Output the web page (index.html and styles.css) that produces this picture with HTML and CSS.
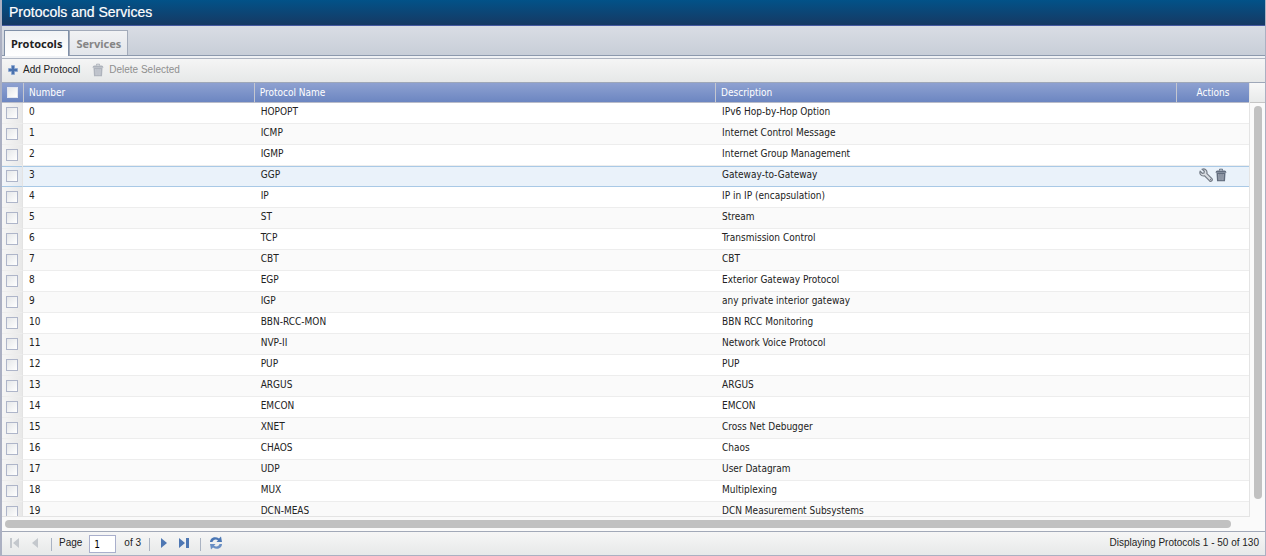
FILE: index.html
```html
<!DOCTYPE html>
<html lang="en">
<head>
<meta charset="utf-8">
<title>Protocols and Services</title>
<link rel="stylesheet" href="styles.css">
</head>
<body>
<svg class="defs" aria-hidden="true">
  <symbol id="trash" viewBox="0 0 12 14">
    <path d="M4.500 2.500V1.200h3v1.300" fill="none" stroke="currentColor"/>
    <path d="M.5 4.700Q.8 2.400 2.500 2.400h7q1.700 0 2 2.300z" fill="currentColor"/>
    <path d="M1.500 5h9l-.5 8.300H2z" fill="currentColor"/>
    <path d="M3.900 6l.2 6.200M6 6v6.200M8.100 6l-.2 6.200" stroke="#dfe3ea" stroke-width=".7"/>
  </symbol>
</svg>
<main class="app">
  <h1 class="title">Protocols and Services</h1>
  <nav class="tabs">
    <button class="tab tab-active" type="button">Protocols</button>
    <button class="tab" type="button">Services</button>
  </nav>
  <div class="toolbar">
    <button class="tool" type="button"><svg class="ico-add" viewBox="0 0 10 10"><path d="M3.5.5h3v3h3v3h-3v3h-3v-3h-3v-3h3z" fill="#4a72ae" stroke="#8aa6d0" stroke-width=".8"/></svg>Add Protocol</button>
    <button class="tool" type="button" disabled><svg class="ico-trash"><use href="#trash"/></svg>Delete Selected</button>
  </div>
  <section class="grid">
    <div class="viewport">
      <table class="table">
        <colgroup><col class="c-check"><col class="c-number"><col class="c-name"><col><col class="c-actions"></colgroup>
        <thead><tr><th><input type="checkbox" aria-label="Select all"></th><th>Number</th><th>Protocol Name</th><th>Description</th><th class="center">Actions</th></tr></thead>
        <tbody>
          <tr><td><input type="checkbox" aria-label="Select 0"></td><td>0</td><td>HOPOPT</td><td>IPv6 Hop-by-Hop Option</td><td></td></tr>
          <tr><td><input type="checkbox" aria-label="Select 1"></td><td>1</td><td>ICMP</td><td>Internet Control Message</td><td></td></tr>
          <tr><td><input type="checkbox" aria-label="Select 2"></td><td>2</td><td>IGMP</td><td>Internet Group Management</td><td></td></tr>
          <tr class="over"><td><input type="checkbox" aria-label="Select 3"></td><td>3</td><td>GGP</td><td>Gateway-to-Gateway</td><td><div class="actions"><button type="button" aria-label="Edit"><svg class="ico-wrench" viewBox="0 0 14 14"><path d="M3.200 1.200 5.300 3.200 5 5 3.300 5.300 1.200 3.300C.2 5.500 1.800 8 4.300 8l1.300-.1 5 5c1.600 1.200 3.500-.8 2.300-2.300l-5-5L8 4.300C8 1.800 5.500.2 3.200 1.200z" fill="#d9dde2" stroke="#737b86" stroke-width="1.200"/><circle cx="11.500" cy="11.500" r=".7" fill="#737b86"/></svg></button><button type="button" aria-label="Delete"><svg class="ico-trash"><use href="#trash"/></svg></button></div></td></tr>
          <tr><td><input type="checkbox" aria-label="Select 4"></td><td>4</td><td>IP</td><td>IP in IP (encapsulation)</td><td></td></tr>
          <tr><td><input type="checkbox" aria-label="Select 5"></td><td>5</td><td>ST</td><td>Stream</td><td></td></tr>
          <tr><td><input type="checkbox" aria-label="Select 6"></td><td>6</td><td>TCP</td><td>Transmission Control</td><td></td></tr>
          <tr><td><input type="checkbox" aria-label="Select 7"></td><td>7</td><td>CBT</td><td>CBT</td><td></td></tr>
          <tr><td><input type="checkbox" aria-label="Select 8"></td><td>8</td><td>EGP</td><td>Exterior Gateway Protocol</td><td></td></tr>
          <tr><td><input type="checkbox" aria-label="Select 9"></td><td>9</td><td>IGP</td><td>any private interior gateway</td><td></td></tr>
          <tr><td><input type="checkbox" aria-label="Select 10"></td><td>10</td><td>BBN-RCC-MON</td><td>BBN RCC Monitoring</td><td></td></tr>
          <tr><td><input type="checkbox" aria-label="Select 11"></td><td>11</td><td>NVP-II</td><td>Network Voice Protocol</td><td></td></tr>
          <tr><td><input type="checkbox" aria-label="Select 12"></td><td>12</td><td>PUP</td><td>PUP</td><td></td></tr>
          <tr><td><input type="checkbox" aria-label="Select 13"></td><td>13</td><td>ARGUS</td><td>ARGUS</td><td></td></tr>
          <tr><td><input type="checkbox" aria-label="Select 14"></td><td>14</td><td>EMCON</td><td>EMCON</td><td></td></tr>
          <tr><td><input type="checkbox" aria-label="Select 15"></td><td>15</td><td>XNET</td><td>Cross Net Debugger</td><td></td></tr>
          <tr><td><input type="checkbox" aria-label="Select 16"></td><td>16</td><td>CHAOS</td><td>Chaos</td><td></td></tr>
          <tr><td><input type="checkbox" aria-label="Select 17"></td><td>17</td><td>UDP</td><td>User Datagram</td><td></td></tr>
          <tr><td><input type="checkbox" aria-label="Select 18"></td><td>18</td><td>MUX</td><td>Multiplexing</td><td></td></tr>
          <tr><td><input type="checkbox" aria-label="Select 19"></td><td>19</td><td>DCN-MEAS</td><td>DCN Measurement Subsystems</td><td></td></tr>
        </tbody>
      </table>
    </div>
    <div class="vscroll"><div class="vhead"></div><div class="vtrack"><div class="vthumb"></div></div></div>
  </section>
  <div class="hscroll"><div class="hthumb"></div></div>
  <footer class="pager">
    <button class="page-btn" type="button" disabled aria-label="First page"><svg viewBox="0 0 12 12"><path d="M1 1h2v10H1zM10 1v10L4 6z" fill="currentColor"/></svg></button>
    <button class="page-btn" type="button" disabled aria-label="Previous page"><svg viewBox="0 0 12 12"><path d="M9 1v10L3 6z" fill="currentColor"/></svg></button>
    <span class="sep"></span>
    <label class="page-label" for="page">Page</label>
    <input class="page-input" id="page" type="text" value="1">
    <span class="of">of 3</span>
    <span class="sep"></span>
    <button class="page-btn" type="button" aria-label="Next page"><svg viewBox="0 0 12 12"><path d="M3 1v10l6-5z" fill="currentColor"/></svg></button>
    <button class="page-btn" type="button" aria-label="Last page"><svg viewBox="0 0 12 12"><path d="M8 1h3v10H8zM1 1v10l6-5z" fill="currentColor"/></svg></button>
    <span class="sep"></span>
    <button class="page-btn refresh" type="button" aria-label="Refresh"><svg viewBox="0 0 14 14"><path d="M1 6C1 2 6-.5 10 2.500L12 .5 13 6H7.500L9 4.300C6.500 2.700 4 4 3.500 6z" fill="#4a76b4"/><path d="M13 8c0 4-5 6.500-9 3.500L2 13.500 1 8h5.500L5 9.700C7.500 11.300 10 10 10.500 8z" fill="#6a8fc4"/></svg></button>
    <span class="status">Displaying Protocols 1 - 50 of 130</span>
  </footer>
</main>
</body>
</html>
```
FILE: styles.css
```css
* { box-sizing: border-box; }
body { margin: 0; font: 10px/14px "Liberation Sans", Arial, sans-serif; color: #222; }
button { margin: 0; padding: 0; border: 0; background: none; font: inherit; color: inherit; }
svg { display: block; }
.defs { position: absolute; width: 0; height: 0; }
.app { display: flex; flex-direction: column; height: 100vh; overflow: hidden; border: solid #abb0c2; border-width: 0 1px 1px 2px; }
.title { flex: none; margin: 0 -1px 0 -2px; height: 26px; padding: 0 9px; border-bottom: 1px solid #4559a0; background: linear-gradient(#025288, #163963); color: #fff; font-size: 14px; font-weight: 400; line-height: 24px; -webkit-text-stroke: 0.2px #fff; }
.tabs { flex: none; display: flex; align-items: flex-end; height: 30px; padding: 0 2px; border-bottom: 1px solid #8c99ad; background: linear-gradient(#d9dde4, #c8ced8); }
.tab { height: 25px; padding: 0 6px; border: 1px solid #a3abba; border-bottom: 0; background: linear-gradient(#f1f2f4, #e2e5ea); color: #858585; font: bold 11px/23px "Noto Sans", Tahoma, sans-serif; }
.tab-active { height: 26px; margin-bottom: -1px; border-color: #8090a8; background: linear-gradient(#f1f3f5, #fff); color: #222; }
.toolbar { flex: none; display: flex; align-items: center; gap: 12px; height: 27px; padding: 2px 6px 0; border-bottom: 1px solid #9ea7b8; background: linear-gradient(#f0f2f5 2px, #adb4c1 2px, #adb4c1 3px, #f5f5f5 3px, #e6e8e8); }
.tool { display: flex; align-items: center; gap: 5px; }
.tool:disabled { color: #8f8f8f; }
.ico-add { width: 10px; height: 10px; }
.ico-trash { width: 12px; height: 14px; color: #626d7e; }
.tool .ico-trash { color: #aeb3bc; }
.grid { flex: 1; min-height: 0; display: flex; background: #fafafa; }
.viewport { flex: 1; min-width: 0; overflow: hidden; border-bottom: 1px solid #e4e4e4; }
.table { width: 100%; table-layout: fixed; border-spacing: 0; border-right: 1px solid #e4e4e4; font: 10px/14px "DejaVu Sans Condensed", Tahoma, sans-serif; }
.c-check { width: 21px; }
.c-number { width: 18.5%; }
.c-name { width: 37%; }
.c-actions { width: 73px; }
th { height: 20px; padding: 0 5px; border-left: 1px solid #c5c7d0; border-bottom: 1px solid #b9bcc9; background: linear-gradient(#8ea1d1, #6c86c1); color: #fff; font-weight: 400; text-align: left; }
th.center { text-align: center; }
td { height: 21px; padding: 0 6px 3px; border-bottom: 1px solid #ededed; background: #fff; }
td:nth-child(3), td:nth-child(4) { padding-left: 7px; }
tr:nth-child(even) td { background: #fafafa; }
th:first-child { padding: 0 0 0 5px; border-left: 0; }
tbody td:first-child { padding: 0 0 0 4px; border-right: 1px solid #e3e3e3; background: linear-gradient(90deg, #f6f6f6, #e8e8e8); }
tbody .over td { border-bottom-color: #a9c9e6; background: #eaf2fa; box-shadow: inset 0 1px #a9c9e6; }
tbody .over td:first-child { background: linear-gradient(90deg, #f3f6fa, #e4e9ef); }
input[type=checkbox] { display: block; appearance: none; width: 12px; height: 12px; margin: 0; border: 1px solid #aeb5c9; background: linear-gradient(135deg, #e5e7e9, #fff); }
th input[type=checkbox] { width: 11px; height: 11px; border-color: #e2e6f0; }
.actions { display: flex; justify-content: center; gap: 2px; }
.ico-wrench { width: 14px; height: 14px; }
.vscroll { flex: none; width: 15px; display: flex; flex-direction: column; }
.vhead { height: 20px; border-bottom: 1px solid #c5c5c5; background: linear-gradient(#f8f8f8, #e8eaea); }
.vtrack { flex: 1; padding: 3px 3px 18px 4px; }
.vthumb { height: 100%; border-radius: 4px; background: #c1c1c1; }
.hscroll { flex: none; height: 14px; padding: 3px 34px 3px 3px; background: #fafafa; }
.hthumb { height: 8px; border-radius: 4px; background: #c1c1c1; }
.pager { flex: none; display: flex; align-items: center; height: 24px; padding: 0 6px 1px 3px; border-top: 1px solid #a2a9b8; background: linear-gradient(#f6f6f6, #e7e9e9); }
.page-btn { width: 20px; padding: 0 4px; color: #4e77b3; }
.page-btn:disabled { color: #c4c8cd; }
.page-btn svg { width: 12px; height: 12px; }
.refresh { width: 22px; }
.refresh svg { width: 14px; height: 14px; }
.sep { width: 1px; height: 13px; margin: 3px 4px 0 6px; background: #aab3c2; }
.page-label { padding-left: 3px; }
.page-input { width: 27px; height: 18px; margin: 2px 8px 0 7px; padding: 0 4px; border: 1px solid #a9afcc; border-radius: 0; background: #fff; font: 10px/16px "DejaVu Sans Condensed", Tahoma, sans-serif; color: #000; }
.of { margin-right: 2px; }
.status { margin-left: auto; }
```
